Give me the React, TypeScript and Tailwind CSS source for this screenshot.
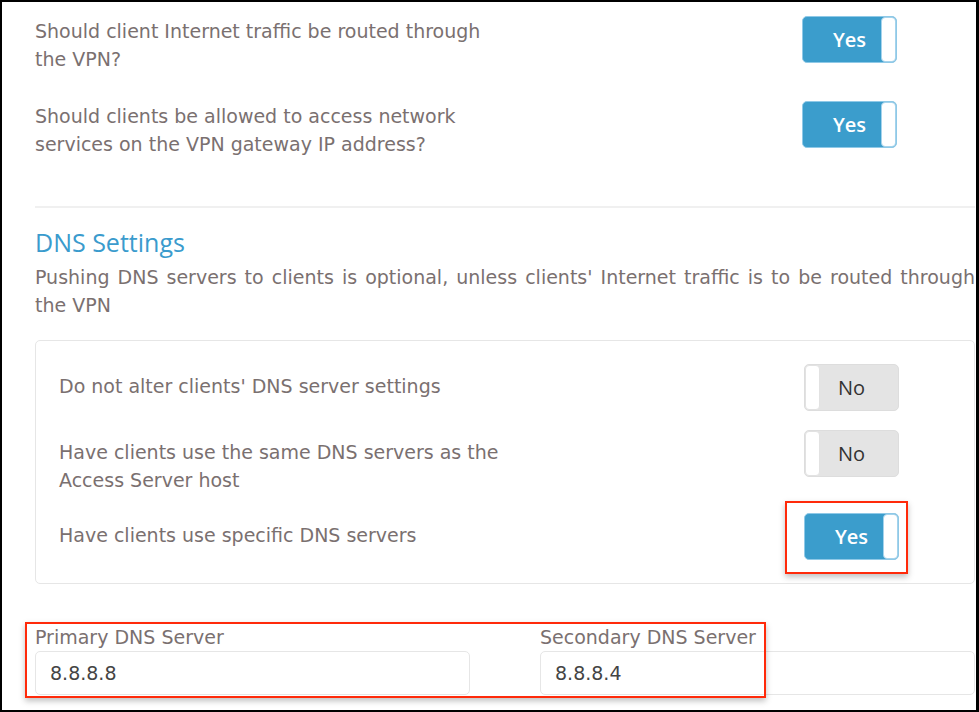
import React from "react";

const body = { fontFamily: '"DejaVu Sans", Verdana, sans-serif' };
const head = { fontFamily: '"Open Sans", "DejaVu Sans", sans-serif' };

function Toggle({ on }: { on: boolean }) {
  if (on) {
    return (
      <div className="relative w-[95px] h-[47px] shrink-0 rounded-[5px] bg-[#3b9dcc] border border-[#8fc9e7] flex items-center justify-center">
        <span className="text-white text-[20px] font-semibold leading-none" style={head}>
          Yes
        </span>
        <div className="absolute right-0 top-0 bottom-0 w-[15px] bg-white rounded-[4px] border border-[#a5d3ec]" />
      </div>
    );
  }
  return (
    <div className="relative w-[95px] h-[47px] shrink-0 rounded-[5px] bg-[#e4e4e4] border border-[#dddddd] flex items-center justify-center">
      <span className="text-[#333333] text-[20px] font-medium leading-none" style={head}>
        No
      </span>
      <div className="absolute left-0 top-0 bottom-0 w-[15px] bg-white rounded-[4px] border border-[#e2e2e2]" />
    </div>
  );
}

function TopRow({ text, children }: { text: React.ReactNode; children: React.ReactNode }) {
  return (
    <div className="flex items-start">
      <div className="w-[470px] pt-[1px] text-[19px] leading-[28px] text-[#7a7070]" style={body}>
        {text}
      </div>
      <div className="ml-auto mr-[78px]">{children}</div>
    </div>
  );
}

function CardRow({ text, children }: { text: React.ReactNode; children: React.ReactNode }) {
  return (
    <div className="flex items-start">
      <div className="w-[460px] pt-[8px] text-[19px] leading-[28px] text-[#7a7070]" style={body}>
        {text}
      </div>
      <div className="ml-auto mr-[52px]">{children}</div>
    </div>
  );
}

export default function App() {
  return (
    <div className="w-[979px] h-[712px] bg-white border-black border-t-2 border-l-2 border-b-2 border-r-[3px] overflow-hidden">
      <div className="pl-[33px] pt-[14px] w-[973px]">
        <div className="flex flex-col gap-[28px]">
          <TopRow text={<>Should client Internet traffic be routed through the VPN?</>}>
            <Toggle on />
          </TopRow>
          <TopRow text={<>Should clients be allowed to access network services on the VPN gateway IP address?</>}>
            <Toggle on />
          </TopRow>
        </div>

        <div className="mt-[48px] h-[2px] bg-[#f0f0f0]" />

        <h2 className="mt-[17px] text-[25px] leading-[34px] text-[#3a9bcd]" style={head}>
          DNS Settings
        </h2>
        <p className="mt-[4px] text-[19px] leading-[28px] text-[#7a7070] text-justify" style={body}>
          Pushing DNS servers to clients is optional, unless clients' Internet traffic is to be routed through the VPN
        </p>

        <div className="mt-[21px] border border-[#e6e6e6] rounded-[5px] p-[23px] flex flex-col gap-[19px]">
          <CardRow text={<>Do not alter clients' DNS server settings</>}>
            <Toggle on={false} />
          </CardRow>
          <CardRow text={<>Have clients use the same DNS servers as the Access Server host</>}>
            <Toggle on={false} />
          </CardRow>
          <CardRow text={<>Have clients use specific DNS servers</>}>
            <div className="relative">
              <Toggle on />
              <div className="absolute left-[-19px] right-[-9px] top-[-12px] bottom-[-14px] border-2 border-[#ff2a0a] shadow-[0_3px_6px_rgba(0,0,0,0.25)] pointer-events-none" />
            </div>
          </CardRow>
        </div>

        <div className="relative mt-[39px] grid grid-cols-2 gap-x-[70px]">
          <div>
            <div className="text-[19px] leading-[28px] text-[#7a7070]" style={body}>
              Primary DNS Server
            </div>
            <div className="h-[44px] border border-[#e6e6e6] rounded-[5px] px-[14px] flex items-center text-[19px] text-[#444444]" style={body}>
              8.8.8.8
            </div>
          </div>
          <div>
            <div className="text-[19px] leading-[28px] text-[#7a7070]" style={body}>
              Secondary DNS Server
            </div>
            <div className="h-[44px] border border-[#e6e6e6] rounded-[5px] px-[14px] flex items-center text-[19px] text-[#444444]" style={body}>
              8.8.8.4
            </div>
          </div>
          <div className="absolute left-[-10px] w-[741px] top-[-1px] h-[76px] border-2 border-[#ff2a0a] shadow-[0_3px_6px_rgba(0,0,0,0.25)] pointer-events-none" />
        </div>
      </div>
    </div>
  );
}
